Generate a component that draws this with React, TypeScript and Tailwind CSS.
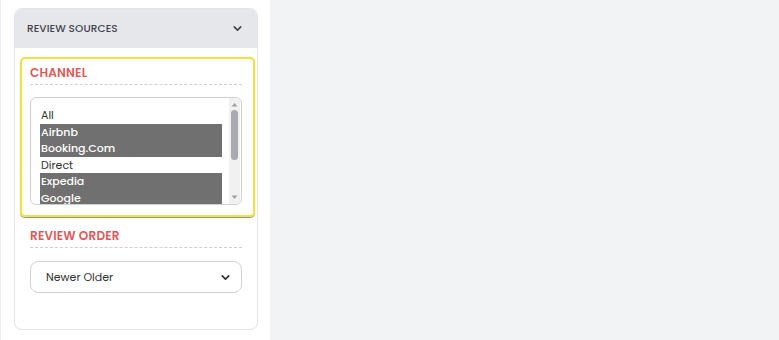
import { ChevronDown } from 'lucide-react';

const channels = [
  { name: 'All', selected: false },
  { name: 'Airbnb', selected: true },
  { name: 'Booking.Com', selected: true },
  { name: 'Direct', selected: false },
  { name: 'Expedia', selected: true },
  { name: 'Google', selected: true },
  { name: 'Vrbo', selected: false },
];

function SectionTitle({ children }: { children: string }) {
  return (
    <div className="border-b border-dashed border-[#cfcfcf] pb-[3px] text-[12px] font-semibold leading-[16px] tracking-[0.2px] text-[#dc5a5a]">
      {children}
    </div>
  );
}

export default function App() {
  return (
    <div className="flex h-[340px] w-[779px] bg-[#f2f3f5] font-['Poppins','Inter',sans-serif]">
      <aside className="w-[270px] shrink-0 border-l border-[#ececec] bg-white pl-[13px] pr-[12px] pt-[8px]">
        <div className="h-[322px] overflow-hidden rounded-[8px] border border-[#e3e4e7] bg-white">
          <div className="flex h-[39px] items-center justify-between bg-[#e6e7ea] pl-[12px] pr-[13px]">
            <span className="text-[10.5px] font-medium tracking-[0.1px] text-[#3f4550]">REVIEW SOURCES</span>
            <ChevronDown size={13} strokeWidth={3} className="text-[#3f4550]" />
          </div>

          <div className="pl-[5px] pr-[2px] pt-[9px]">
            <div className="rounded-[5px] border-2 border-[#f0e23c] pl-[8px] pr-[11px] pt-[6px] pb-[10px] shadow-[0_1px_1px_rgba(0,0,0,0.45)]">
              <SectionTitle>CHANNEL</SectionTitle>
              <div className="mt-[12px] flex h-[108px] overflow-hidden rounded-[6px] border border-[#cfd1d4] bg-white">
                <div className="flex-1 overflow-hidden pl-[9px] pt-[9px] text-[11px] leading-[16.6px]">
                  {channels.map((c) => (
                    <div
                      key={c.name}
                      className={c.selected ? 'bg-[#707070] pl-[1px] font-medium text-white' : 'pl-[1px] text-[#333333]'}
                    >
                      {c.name}
                    </div>
                  ))}
                </div>
                <div className="ml-[7px] mr-[1px] flex w-[11px] flex-col items-center bg-[#f1f1f1]">
                  <svg width="7" height="5" viewBox="0 0 7 5" className="mt-[4px]">
                    <path d="M0.5 4.5 L3.5 1 L6.5 4.5 Z" fill="#a3a3a3" />
                  </svg>
                  <div className="mt-[3px] h-[50px] w-[7px] rounded-full bg-[#a8aaad]" />
                  <div className="flex-1" />
                  <svg width="7" height="5" viewBox="0 0 7 5" className="mb-[4px]">
                    <path d="M0.5 0.5 L3.5 4 L6.5 0.5 Z" fill="#a3a3a3" />
                  </svg>
                </div>
              </div>
            </div>

            <div className="pl-[10px] pr-[13px] pt-[11px]">
              <SectionTitle>REVIEW ORDER</SectionTitle>
              <div className="mt-[13px] flex h-[32px] items-center justify-between rounded-[8px] border border-[#cfd1d4] bg-white pl-[15px] pr-[9px]">
                <span className="text-[11px] text-[#333333]">Newer Older</span>
                <ChevronDown size={13} strokeWidth={3.2} className="text-[#333333]" />
              </div>
            </div>
          </div>
        </div>
      </aside>
      <main className="flex-1" />
    </div>
  );
}
